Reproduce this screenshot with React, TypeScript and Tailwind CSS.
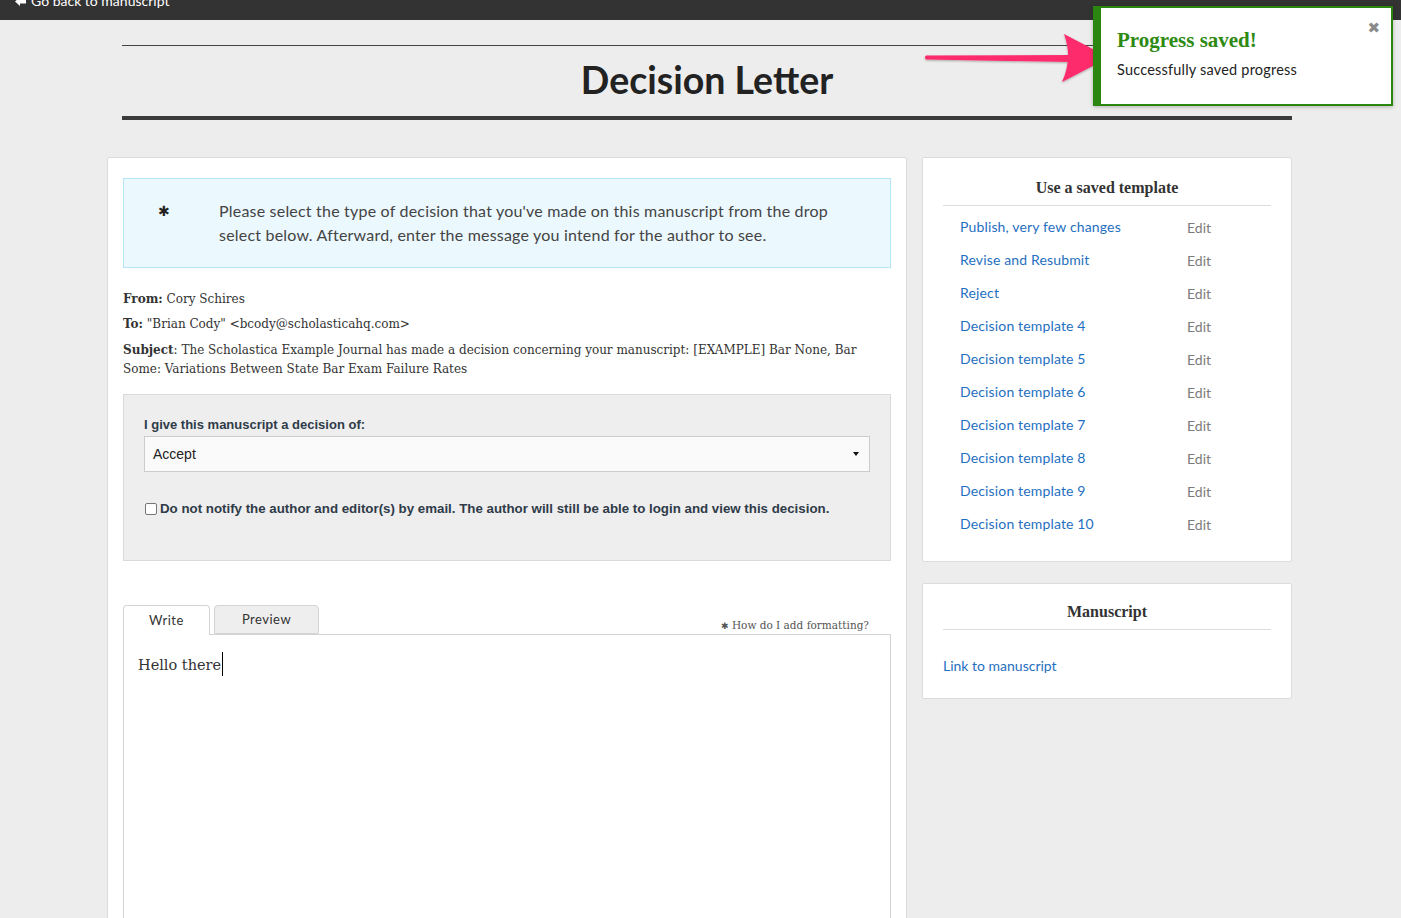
const sans = "font-['Lato','Open_Sans',sans-serif]";
const serif = "font-['DejaVu_Serif',serif]";
const bookSerif = "font-['Liberation_Serif',serif]";

const templates = [
  "Publish, very few changes",
  "Revise and Resubmit",
  "Reject",
  "Decision template 4",
  "Decision template 5",
  "Decision template 6",
  "Decision template 7",
  "Decision template 8",
  "Decision template 9",
  "Decision template 10",
];

function PinkArrow() {
  return (
    <svg className="pointer-events-none absolute left-0 top-0" width="1401" height="120">
      <defs>
        <filter id="sh" x="-5%" y="-50%" width="110%" height="200%">
          <feDropShadow dx="0" dy="1" stdDeviation="1" floodColor="#000" floodOpacity="0.3" />
        </filter>
      </defs>
      <g filter="url(#sh)" fill="#fd2b6c">
        <path d="M926 55.5 L1072 55 L1072 62 L926 59.5 Q924 57.5 926 55.5 Z" />
        <path d="M1064 34 L1109 57.5 L1062 82 Q1073 58 1064 34 Z" />
      </g>
    </svg>
  );
}

function Toast() {
  return (
    <div className="absolute right-[8px] top-[6px] h-[100px] w-[300px] border-2 border-l-[8px] border-[#2a860f] bg-white pl-[16px] pt-[18px] shadow-[0_1px_4px_rgba(0,0,0,0.25)]">
      <span className="absolute right-[11px] top-[13px] font-['DejaVu_Sans',sans-serif] text-[15px] leading-none text-[#8a8a8a]">✖</span>
      <div className={`${bookSerif} text-[21px] font-bold leading-[28px] text-[#2e8a12]`}>Progress saved!</div>
      <div className={`${sans} mt-[6px] text-[14.5px] leading-[20px] tracking-[0.2px] text-[#222]`}>Successfully saved progress</div>
    </div>
  );
}

function TopBar() {
  return (
    <div className="h-[20px] overflow-hidden bg-[#333333]">
      <div className={`${sans} -mt-[9px] flex h-[20px] items-center gap-[5px] pl-[15px] text-[14px] leading-[20px] text-white`}>
        <svg width="11" height="9" viewBox="0 0 11 9" fill="white">
          <path d="M0 4.5 L5 0 L5 2.5 L11 2.5 L11 6.5 L5 6.5 L5 9 Z" />
        </svg>
        <span>Go back to manuscript</span>
      </div>
    </div>
  );
}

function Header() {
  return (
    <div className="ml-[122px] w-[1170px] pt-[25px]">
      <div className="h-px bg-[#444]" />
      <h1 className={`${sans} mt-[12px] text-center text-[37.5px] font-bold leading-[44px] text-[#222]`}>Decision Letter</h1>
      <div className="mt-[14px] h-[4px] bg-[#3b3b3b]" />
    </div>
  );
}

function LeftCard() {
  return (
    <div className="h-[780px] w-[800px] rounded-[2px] border border-[#dcdcdc] bg-white px-[15px] pt-[20px]">
      <div className={`${sans} flex border border-[#b5e6f7] bg-[#ebf8fe] py-[20px] text-[16px] leading-[24px] tracking-[0.2px] text-[#444]`}>
        <div className="w-[95px] shrink-0 pl-[34px] font-['DejaVu_Sans',sans-serif] text-[14px] tracking-normal text-[#222]">✱</div>
        <p className="w-[630px]">
          Please select the type of decision that you've made on this manuscript from the drop select below. Afterward, enter the message you intend for the author to see.
        </p>
      </div>

      <div className={`${serif} mt-[22px] text-[12px] leading-[19px] text-[#333]`}>
        <p><b>From:</b> Cory Schires</p>
        <p className="mt-[6px]"><b>To:</b> "Brian Cody" &lt;bcody@scholasticahq.com&gt;</p>
        <p className="mt-[7px] w-[760px]">
          <b>Subject</b>: The Scholastica Example Journal has made a decision concerning your manuscript: [EXAMPLE] Bar None, Bar Some: Variations Between State Bar Exam Failure Rates
        </p>
      </div>

      <div className="mt-[15px] h-[167px] border border-[#dadada] bg-[#eeeeee] px-[20px] pt-[21px]">
        <label className="block font-['Liberation_Sans',sans-serif] text-[13px] font-bold leading-[18px] text-[#2f3b48]">
          I give this manuscript a decision of:
        </label>
        <div className="mt-[2px] flex h-[36px] items-center justify-between border border-[#cccccc] bg-[#fafafa] pl-[8px] pr-[10px]">
          <span className="font-['Liberation_Sans',sans-serif] text-[14px] text-[#222]">Accept</span>
          <svg width="6" height="4" viewBox="0 0 6 4"><path d="M0 0 H6 L3 4 Z" fill="#111" /></svg>
        </div>
        <div className="mt-[28px] flex items-center">
          <span className="ml-px mr-[3px] inline-block h-[12px] w-[12px] rounded-[2px] border border-[#767676] bg-white" />
          <span className="whitespace-nowrap font-['Liberation_Sans',sans-serif] text-[13.3px] font-bold leading-[18px] text-[#2f3b48]">
            Do not notify the author and editor(s) by email. The author will still be able to login and view this decision.
          </span>
        </div>
      </div>

      <div className="mt-[44px] flex items-end justify-between">
        <div className="flex items-end gap-[4px]">
          <div className={`${sans} relative -mb-px flex h-[30px] w-[87px] items-center justify-center rounded-t-[4px] border border-b-0 border-[#d4d4d4] bg-white text-[13px] tracking-[0.5px] text-[#333]`}>Write</div>
          <div className={`${sans} flex h-[29px] w-[105px] items-center justify-center rounded-t-[4px] border border-[#d4d4d4] bg-[#eeeeee] text-[13px] tracking-[0.5px] text-[#333]`}>Preview</div>
        </div>
        <div className={`${serif} mb-0 mr-[22px] text-[10.5px] text-[#555]`}>
          <span className="font-['DejaVu_Sans',sans-serif] text-[9px]">✱</span> How do I add formatting?
        </div>
      </div>
      <div className="h-[400px] border border-[#d4d4d4] bg-white px-[14px] pt-[11px]">
        <span className={`${serif} text-[14.5px] leading-[24px] text-[#333]`}>Hello there</span>
        <span className="ml-px inline-block h-[24px] w-px translate-y-[6px] bg-black" />
      </div>
    </div>
  );
}

function SideHeading({ children }: { children: string }) {
  return (
    <div className={`${bookSerif} border-b border-[#dddddd] pb-[7px] text-center text-[16px] font-bold leading-[20px] text-[#333]`}>
      {children}
    </div>
  );
}

function RightColumn() {
  return (
    <div className="ml-[15px] flex w-[370px] flex-col gap-[21px]">
      <div className="rounded-[2px] border border-[#dcdcdc] bg-white px-[20px] pb-[14px] pt-[20px]">
        <SideHeading>Use a saved template</SideHeading>
        <ul className={`${sans} mt-[11px] pl-[17px] text-[14px]`}>
          {templates.map((t) => (
            <li key={t} className="flex h-[33px] leading-[20px]">
              <a className="w-[227px] tracking-[0.15px] text-[#1f70c1]">{t}</a>
              <span className="translate-y-[1px] text-[#7b7b7b]">Edit</span>
            </li>
          ))}
        </ul>
      </div>
      <div className="rounded-[2px] border border-[#dcdcdc] bg-white px-[20px] pb-[22px] pt-[18px]">
        <SideHeading>Manuscript</SideHeading>
        <a className={`${sans} mt-[26px] block text-[14px] leading-[20px] text-[#1f70c1]`}>Link to manuscript</a>
      </div>
    </div>
  );
}

export default function App() {
  return (
    <div className="relative h-[918px] overflow-hidden bg-[#ededed]">
      <TopBar />
      <Header />
      <div className="ml-[107px] mt-[37px] flex items-start">
        <LeftCard />
        <RightColumn />
      </div>
      <PinkArrow />
      <Toast />
    </div>
  );
}
